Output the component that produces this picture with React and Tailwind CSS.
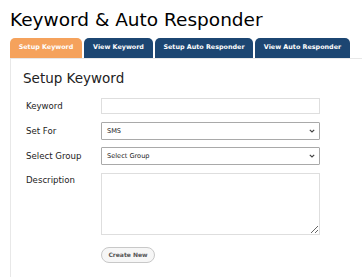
import React from "react";

const tabs = [
  { label: "Setup Keyword", active: true, w: "w-[72px]" },
  { label: "View Keyword", w: "w-[69px]" },
  { label: "Setup Auto Responder", w: "w-[98px]" },
  { label: "View Auto Responder", w: "w-[95px]" },
];

const Chevron = () => (
  <svg width="6" height="4" viewBox="0 0 6 4">
    <path d="M0.8 0.8l2.2 2.2 2.2-2.2" fill="none" stroke="#444" strokeWidth="1.2" />
  </svg>
);

const KeywordPage = () => {
  return (
    <div className="w-[362px] h-[277px] overflow-hidden bg-white font-['DejaVu_Sans',sans-serif] text-[#222]">
      <h1 className="pl-[10px] pt-[8px] text-[18.5px] leading-[24px] text-black">
        Keyword &amp; Auto Responder
      </h1>

      <div className="mt-[6px] ml-[10px] flex gap-[2px] h-[20px]">
        {tabs.map((t) => (
          <div
            key={t.label}
            className={`${t.w} rounded-t-[5px] flex items-center justify-center text-[6.4px] font-bold text-white ${
              t.active ? "bg-[#f5a25c]" : "bg-[#1c4672]"
            }`}
          >
            {t.label}
          </div>
        ))}
      </div>

      <div className="ml-[10px] border-l border-t border-[#e8e8e8] h-[220px] pl-[12px]">
        <h2 className="pt-[11px] text-[13.5px] leading-[17px] text-[#222]">Setup Keyword</h2>

        <div className="mt-[11px] flex flex-col text-[8.6px] leading-[12px]">
          <div className="flex items-center h-[16px]">
            <label className="w-[78px] pl-[3px]">Keyword</label>
            <input className="w-[219px] h-[16px] border border-[#dedede] outline-none" />
          </div>

          <div className="mt-[8px] flex items-center h-[18px]">
            <label className="w-[78px] pl-[3px]">Set For</label>
            <div className="w-[219px] h-[18px] border border-[#a9a9a9] rounded-[1px] flex items-center justify-between pl-[5px] pr-[4px] text-[6.6px]">
              <span>SMS</span>
              <Chevron />
            </div>
          </div>

          <div className="mt-[7px] flex items-center h-[18px]">
            <label className="w-[78px] pl-[3px]">Select Group</label>
            <div className="w-[219px] h-[18px] border border-[#a9a9a9] rounded-[1px] flex items-center justify-between pl-[5px] pr-[4px] text-[6.6px]">
              <span>Select Group</span>
              <Chevron />
            </div>
          </div>

          <div className="mt-[8px] flex items-start">
            <label className="w-[78px] pl-[3px] pt-[1px]">Description</label>
            <textarea className="w-[219px] h-[62px] border border-[#dedede] outline-none resize-y" />
          </div>

          <div className="mt-[12px] pl-[78px]">
            <button className="w-[54px] h-[16px] rounded-full border border-[#c8c8c8] bg-[#f6f6f6] text-[6px] font-bold text-[#555]">
              Create New
            </button>
          </div>
        </div>
      </div>
    </div>
  );
};

export default KeywordPage;
